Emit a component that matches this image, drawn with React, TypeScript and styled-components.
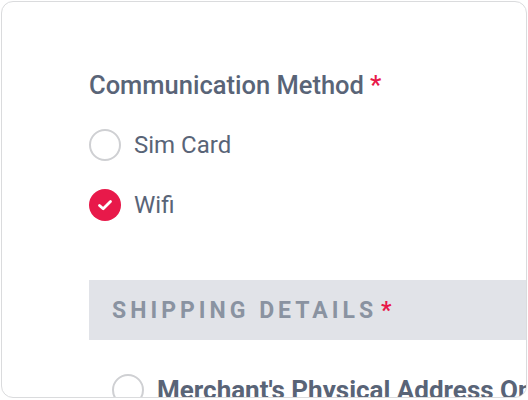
import React from 'react';
import styled, { createGlobalStyle } from 'styled-components';

const Global = createGlobalStyle`
    html, body {
        margin: 0;
        padding: 0;
        background: #fff;
    }
    body {
        font-family: Roboto, "Liberation Sans", sans-serif;
        -webkit-font-smoothing: antialiased;
    }
`;

const Card = styled.div`
    box-sizing: border-box;
    width: 526px;
    height: 397px;
    margin: 1px;
    border: 1px solid #dadbdd;
    border-radius: 12px;
    overflow: hidden;
    padding: 68px 0 0 87px;
    background: #fff;
`;

const Label = styled.div`
    font-size: 25.5px;
    line-height: 30px;
    font-weight: 500;
    color: #596477;
    white-space: nowrap;
`;

const Required = styled.span<{ $gap?: number }>`
    color: #e8194a;
    margin-left: ${p => (p.$gap ?? 6)}px;
`;

const Options = styled.div`
    display: flex;
    flex-direction: column;
    gap: 20px;
    margin-top: 25px;
`;

const Option = styled.label<{ $indent?: number; $bold?: boolean }>`
    display: flex;
    align-items: center;
    gap: 13px;
    height: 40px;
    padding-left: ${p => p.$indent || 0}px;
    font-size: ${p => (p.$bold ? 26 : 24)}px;
    font-weight: ${p => (p.$bold ? 700 : 400)};
    color: #596477;
    white-space: nowrap;
`;

const Radio = styled.span<{ $checked?: boolean }>`
    box-sizing: border-box;
    flex: none;
    display: flex;
    align-items: center;
    justify-content: center;
    width: 32px;
    height: 32px;
    border-radius: 50%;
    border: ${p => (p.$checked ? 'none' : '2px solid #cfd0d3')};
    background: ${p => (p.$checked ? '#e8194a' : '#fff')};
`;

const SectionBar = styled.div`
    display: flex;
    align-items: center;
    height: 60px;
    margin-top: 55px;
    padding-left: 23px;
    background: #e1e3e8;
    font-size: 23px;
    font-weight: 700;
    letter-spacing: 4px;
    color: #8a93a1;
    white-space: nowrap;
`;

const BottomRow = styled.div`
    margin-top: 30px;
`;

const Check = () => (
    <svg width="16" height="16" viewBox="0 0 16 16">
        <polyline points="2.5,8.5 6.2,11.8 13.5,4.5" fill="none" stroke="#fff" strokeWidth="2.8" strokeLinecap="round" strokeLinejoin="round" />
    </svg>
);

const App = () => {
    return (
        <>
            <Global />
            <Card>
                <Label>Communication Method<Required>*</Required></Label>
                <Options>
                    <Option>
                        <Radio />
                        Sim Card
                    </Option>
                    <Option>
                        <Radio $checked><Check /></Radio>
                        Wifi
                    </Option>
                </Options>
                <SectionBar>
                    SHIPPING DETAILS<Required $gap={4}>*</Required>
                </SectionBar>
                <BottomRow>
                    <Option $indent={23} $bold>
                        <Radio />
                        Merchant's Physical Address On File
                    </Option>
                </BottomRow>
            </Card>
        </>
    );
};

export default App;
